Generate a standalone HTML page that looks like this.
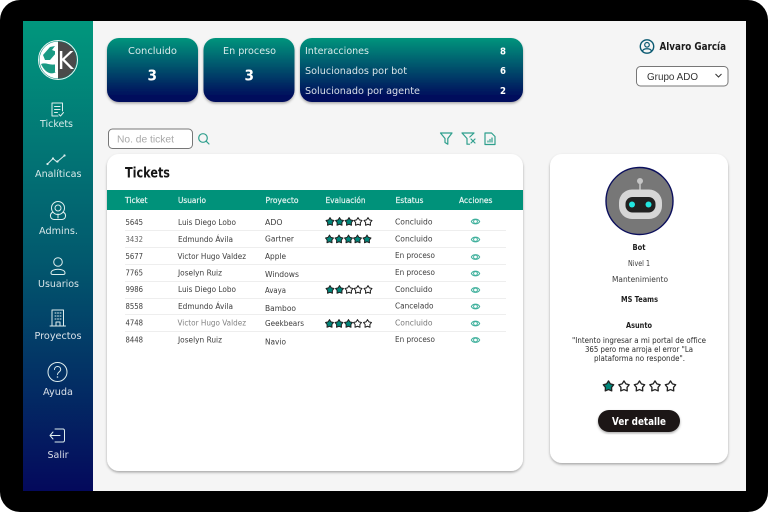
<!DOCTYPE html>
<html lang="es"><head><meta charset="utf-8"><title>Tickets</title>
<style>
html,body{margin:0;padding:0;background:#fff;width:768px;height:512px;overflow:hidden}
svg{display:block}
text{font-family:"DejaVu Sans","Liberation Sans",sans-serif}
.s{fill:#fff;font-size:9.8px;opacity:.85}
.c{fill:#fff;font-size:9.8px;opacity:.85}
.h{fill:#fff;font-size:7.8px;stroke:#fff;stroke-width:.2;opacity:.9}
.r{fill:#3c3c3c;font-size:7.8px}
.d{fill:#1c1c1c;font-size:8px;font-weight:bold}
.g{fill:#3c3c3c;font-size:8px}
.i{fill:none;stroke:#dfeeee;stroke-width:1;stroke-linecap:round;stroke-linejoin:round}
.t{fill:none;stroke:#2f9f8d;stroke-width:1.2;stroke-linecap:round;stroke-linejoin:round}
</style></head><body>
<svg width="768" height="512" viewBox="0 0 768 512" xmlns="http://www.w3.org/2000/svg">
<defs>
<linearGradient id="side" x1="0" y1="0" x2="0" y2="1"><stop offset="0" stop-color="#01977d"/><stop offset=".5" stop-color="#025a6e"/><stop offset="1" stop-color="#04095c"/></linearGradient>
<linearGradient id="card" x1="0" y1="0" x2="0" y2="1"><stop offset="0" stop-color="#01957c"/><stop offset=".95" stop-color="#03085b"/></linearGradient>
<filter id="sh" x="-10%" y="-10%" width="120%" height="120%"><feDropShadow dx="0" dy="1.5" stdDeviation="1.3" flood-color="#000" flood-opacity=".32"/></filter>
<symbol id="sf" viewBox="0 0 12 12"><path d="M6 1.300 L7.700 4 L10.800 4.800 L8.800 7.300 L9 10.500 L6 9.300 L3 10.500 L3.200 7.300 L1.200 4.800 L4.300 4 Z" fill="#00877a" stroke="#222" stroke-width="1.200" stroke-linejoin="round"/></symbol>
<symbol id="so" viewBox="0 0 12 12"><path d="M6 1.300 L7.700 4 L10.800 4.800 L8.800 7.300 L9 10.500 L6 9.300 L3 10.500 L3.200 7.300 L1.200 4.800 L4.300 4 Z" fill="#fff" stroke="#222" stroke-width="1.200" stroke-linejoin="round"/></symbol>
<symbol id="eye" viewBox="0 0 10 10"><path d="M.8 5 C2.500 1.800 7.500 1.800 9.200 5 C7.500 8.200 2.500 8.200 .8 5 Z" fill="none" stroke="#3fb09c" stroke-width="1"/><circle cx="5" cy="5" r="1.900" fill="none" stroke="#3fb09c" stroke-width="1"/></symbol>
</defs>

<rect x="0" y="0" width="768" height="512" rx="20" fill="#000"/>
<rect x="23" y="21" width="723" height="470" fill="#f5f5f5"/>
<rect x="23" y="21" width="70" height="470" fill="url(#side)"/>

<!-- logo -->
<circle cx="58" cy="60" r="19.500" fill="none" stroke="#e8f4f2" stroke-width="1"/>
<path d="M58 41.500 A18.500 18.500 0 0 0 58 78.500 Z" fill="#fff"/>
<path d="M58 41.500 A18.500 18.500 0 0 1 58 78.500 Z" fill="#4a4a4a"/>
<path d="M43 55 L50 47 L55 46 L52 50 L57 52 L50 60 L45 60 Z" fill="#1a9a84"/>
<path d="M41 64 C46 62 50 66 57 64 L57 71 C52 76 45 73 41 64 Z" fill="#1a9a84"/>
<path d="M55 48 L58 46 V72 L55 72 Z" fill="#fff"/>
<text x="57.500" y="69" font-size="25" fill="#fff" textLength="16" lengthAdjust="spacingAndGlyphs">K</text>

<!-- sidebar icons -->
<g class="i">
<path d="M62.500 111 V103 H52 V116 H58"/><path d="M54.500 106.500 H60 M54.500 109.500 H60 M54.500 112.500 H57.500"/><path d="M59 114.500 L60.500 116 L63.500 112.500"/>
<path d="M47.500 164 L53 158.500 L57 162 L64.500 155.500"/><circle cx="47.500" cy="164" r=".6"/><circle cx="53" cy="158.500" r=".6"/><circle cx="57.500" cy="161.500" r=".6"/><circle cx="64.500" cy="155.500" r=".6"/>
<circle cx="58" cy="208" r="6.500"/><circle cx="58" cy="208" r="3"/><path d="M53 212 C49 214 50 219 54 219.500 H62 C66 219 67 214 63 212"/><path d="M58 214 V218"/>
<circle cx="58" cy="262" r="4.300"/><path d="M51 273 C51 268 65 268 65 273 C65 275 63 274.500 58 274.500 C53 274.500 51 275 51 273 Z"/>
<path d="M52 325.500 V310 H63.500 V325.500 M50 326 H65.500"/><path d="M55 313 h1 M57.500 313 h1 M60 313 h1 M55 316 h1 M57.500 316 h1 M60 316 h1 M55 319 h1 M57.500 319 h1 M60 319 h1"/><path d="M56 326 V322 H60 V326"/>
<circle cx="57.500" cy="372" r="9.500"/>
<path d="M54.500 369.500 C54.500 365.500 60.700 365.500 60.700 369.500 C60.700 372 57.500 372 57.500 374.500"/><circle cx="57.500" cy="377" r=".3"/>
<path d="M55 429 H63 C64.500 429 64.500 430 64.500 431 V440 C64.500 441 64.500 442 63 442 H55"/><path d="M50 435.500 H60 M53 432 L50 435.500 L53 439"/>
</g>
<g class="s">
<text x="40" y="127" textLength="33" lengthAdjust="spacingAndGlyphs">Tickets</text>
<text x="35" y="177" textLength="46.500" lengthAdjust="spacingAndGlyphs">Analíticas</text>
<text x="39" y="234" textLength="39" lengthAdjust="spacingAndGlyphs">Admins.</text>
<text x="38" y="287" textLength="41" lengthAdjust="spacingAndGlyphs">Usuarios</text>
<text x="34.500" y="339" textLength="47" lengthAdjust="spacingAndGlyphs">Proyectos</text>
<text x="43" y="395" textLength="30" lengthAdjust="spacingAndGlyphs">Ayuda</text>
<text x="47.500" y="458" textLength="21" lengthAdjust="spacingAndGlyphs">Salir</text>
</g>

<!-- stat cards -->
<g filter="url(#sh)">
<rect x="107" y="38" width="91" height="64" rx="12" fill="url(#card)"/>
<rect x="203.500" y="38" width="91" height="64" rx="12" fill="url(#card)"/>
<rect x="300" y="38" width="223" height="64" rx="12" fill="url(#card)"/>
</g>
<g class="c">
<text x="128" y="54" textLength="49" lengthAdjust="spacingAndGlyphs">Concluido</text>
<text x="223" y="54" textLength="53" lengthAdjust="spacingAndGlyphs">En proceso</text>
<text x="305" y="54" textLength="64" lengthAdjust="spacingAndGlyphs">Interacciones</text>
<text x="305" y="74" textLength="102" lengthAdjust="spacingAndGlyphs">Solucionados por bot</text>
<text x="305" y="94" textLength="115" lengthAdjust="spacingAndGlyphs">Solucionado por agente</text>
</g>
<g fill="#fff" font-weight="bold">
<text x="147.500" y="80.500" font-size="15" textLength="9.500" lengthAdjust="spacingAndGlyphs">3</text>
<text x="244.500" y="80.500" font-size="15" textLength="9.500" lengthAdjust="spacingAndGlyphs">3</text>
<text x="500" y="54.500" font-size="10" textLength="6" lengthAdjust="spacingAndGlyphs">8</text>
<text x="500" y="74" font-size="10" textLength="6" lengthAdjust="spacingAndGlyphs">6</text>
<text x="500" y="94" font-size="10" textLength="6" lengthAdjust="spacingAndGlyphs">2</text>
</g>

<!-- search -->
<rect x="108.500" y="129" width="84" height="19.500" rx="4" fill="#fff" stroke="#777" stroke-width="1"/>
<text x="117" y="142.500" fill="#a8a8a8" font-size="10" style="font-family:'Liberation Sans',sans-serif" textLength="57" lengthAdjust="spacingAndGlyphs">No. de ticket</text>
<g class="t"><circle cx="203" cy="138" r="4.300"/><path d="M206.200 141.200 L209 144"/></g>

<!-- tool icons -->
<g class="t">
<path d="M440.500 133 H452 L447.800 138.500 V144.200 L445 142.500 V138.500 Z"/>
<path d="M462 133 H474 L469.800 137 M462 133 L467 138.500 V144.200 L469.500 144.200"/><path d="M471 139 L475 143 M475 139 L471 143"/>
<path d="M485 133 H491.500 L495 136.500 V144.500 H485 Z"/><path d="M488 142 V141 M490 142 V139.500 M492 142 V138"/>
</g>

<!-- tickets card -->
<rect x="107" y="154" width="416" height="317" rx="12" fill="#fff" filter="url(#sh)"/>
<text x="125" y="177.500" font-size="14" font-weight="bold" fill="#161616" textLength="45" lengthAdjust="spacingAndGlyphs">Tickets</text>
<rect x="107" y="190" width="416" height="20" fill="#00927a"/>
<g class="h">
<text x="125" y="203" textLength="22.500" lengthAdjust="spacingAndGlyphs">Ticket</text>
<text x="178" y="203" textLength="28" lengthAdjust="spacingAndGlyphs">Usuario</text>
<text x="265.500" y="203" textLength="33" lengthAdjust="spacingAndGlyphs">Proyecto</text>
<text x="325.500" y="203" textLength="40" lengthAdjust="spacingAndGlyphs">Evaluación</text>
<text x="395.500" y="203" textLength="28" lengthAdjust="spacingAndGlyphs">Estatus</text>
<text x="459" y="203" textLength="33.500" lengthAdjust="spacingAndGlyphs">Acciones</text>
</g>
<g stroke="#eeeeee" stroke-width="1">
<path d="M125 230.500 H506 M125 247.500 H506 M125 264.500 H506 M125 281.500 H506 M125 298.500 H506 M125 314.500 H506 M125 331.500 H506"/>
</g>
<g class="r">
<text x="125.500" y="225" textLength="17.500" lengthAdjust="spacingAndGlyphs">5645</text>
<text x="125.500" y="242" textLength="17.500" lengthAdjust="spacingAndGlyphs" opacity=".8">3432</text>
<text x="125.500" y="259" textLength="17.500" lengthAdjust="spacingAndGlyphs">5677</text>
<text x="125.500" y="275.500" textLength="17.500" lengthAdjust="spacingAndGlyphs">7765</text>
<text x="125.500" y="292" textLength="17.500" lengthAdjust="spacingAndGlyphs">9986</text>
<text x="125.500" y="309" textLength="17.500" lengthAdjust="spacingAndGlyphs">8558</text>
<text x="125.500" y="325.500" textLength="17.500" lengthAdjust="spacingAndGlyphs">4748</text>
<text x="125.500" y="342.500" textLength="17.500" lengthAdjust="spacingAndGlyphs">8448</text>

<text x="178" y="225" textLength="58" lengthAdjust="spacingAndGlyphs">Luis Diego Lobo</text>
<text x="178" y="242" textLength="55" lengthAdjust="spacingAndGlyphs">Edmundo Ávila</text>
<text x="177.500" y="259" textLength="68.500" lengthAdjust="spacingAndGlyphs">Victor Hugo Valdez</text>
<text x="178" y="275.500" textLength="44" lengthAdjust="spacingAndGlyphs">Joselyn Ruiz</text>
<text x="178" y="292" textLength="58" lengthAdjust="spacingAndGlyphs">Luis Diego Lobo</text>
<text x="178" y="309" textLength="55" lengthAdjust="spacingAndGlyphs">Edmundo Ávila</text>
<text x="177.500" y="325.500" textLength="68.500" lengthAdjust="spacingAndGlyphs" opacity=".65">Victor Hugo Valdez</text>
<text x="178" y="342.500" textLength="44" lengthAdjust="spacingAndGlyphs">Joselyn Ruiz</text>

<text x="265" y="225" textLength="17.500" lengthAdjust="spacingAndGlyphs">ADO</text>
<text x="265" y="241.500" textLength="29" lengthAdjust="spacingAndGlyphs">Gartner</text>
<text x="265" y="259" textLength="21" lengthAdjust="spacingAndGlyphs">Apple</text>
<text x="265" y="277" textLength="34" lengthAdjust="spacingAndGlyphs">Windows</text>
<text x="265" y="293" textLength="21" lengthAdjust="spacingAndGlyphs">Avaya</text>
<text x="265" y="311" textLength="31" lengthAdjust="spacingAndGlyphs">Bamboo</text>
<text x="265" y="326" textLength="39" lengthAdjust="spacingAndGlyphs">Geekbears</text>
<text x="265" y="344.500" textLength="21" lengthAdjust="spacingAndGlyphs">Navio</text>

<text x="395" y="224.500" textLength="37.500" lengthAdjust="spacingAndGlyphs">Concluido</text>
<text x="395" y="241.500" textLength="37.500" lengthAdjust="spacingAndGlyphs">Concluido</text>
<text x="395" y="258" textLength="40" lengthAdjust="spacingAndGlyphs">En proceso</text>
<text x="395" y="275" textLength="40" lengthAdjust="spacingAndGlyphs">En proceso</text>
<text x="395" y="292" textLength="37.500" lengthAdjust="spacingAndGlyphs">Concluido</text>
<text x="395" y="308.500" textLength="38.500" lengthAdjust="spacingAndGlyphs">Cancelado</text>
<text x="395" y="325.500" textLength="37.500" lengthAdjust="spacingAndGlyphs" opacity=".7">Concluido</text>
<text x="395" y="342" textLength="40" lengthAdjust="spacingAndGlyphs">En proceso</text>
</g>

<!-- table stars -->
<use href="#sf" x="325" y="216.500" width="10" height="10"/><use href="#sf" x="334.500" y="216.500" width="10" height="10"/><use href="#sf" x="344" y="216.500" width="10" height="10"/><use href="#so" x="353" y="216.500" width="10" height="10"/><use href="#so" x="363" y="216.500" width="10" height="10"/>
<use href="#sf" x="324.500" y="234" width="10" height="10"/><use href="#sf" x="334" y="234" width="10" height="10"/><use href="#sf" x="343.500" y="234" width="10" height="10"/><use href="#sf" x="352.500" y="234" width="10" height="10"/><use href="#sf" x="362" y="234" width="10" height="10"/>
<use href="#sf" x="325" y="284.500" width="10" height="10"/><use href="#sf" x="334.500" y="284.500" width="10" height="10"/><use href="#so" x="344" y="284.500" width="10" height="10"/><use href="#so" x="353" y="284.500" width="10" height="10"/><use href="#so" x="363" y="284.500" width="10" height="10"/>
<use href="#sf" x="324.500" y="318.500" width="10" height="10"/><use href="#sf" x="334" y="318.500" width="10" height="10"/><use href="#sf" x="343.500" y="318.500" width="10" height="10"/><use href="#so" x="352.500" y="318.500" width="10" height="10"/><use href="#so" x="362.500" y="318.500" width="10" height="10"/>

<!-- eyes -->
<use href="#eye" x="470.500" y="216.500" width="10" height="10"/>
<use href="#eye" x="470.500" y="234.500" width="10" height="10"/>
<use href="#eye" x="470.500" y="252" width="10" height="10"/>
<use href="#eye" x="470.500" y="268.500" width="10" height="10"/>
<use href="#eye" x="470.500" y="285" width="10" height="10"/>
<use href="#eye" x="470.500" y="301.500" width="10" height="10"/>
<use href="#eye" x="470.500" y="318.500" width="10" height="10"/>
<use href="#eye" x="470.500" y="335" width="10" height="10"/>

<!-- user -->
<circle cx="647" cy="46.500" r="6.700" fill="none" stroke="#0b5a72" stroke-width="1.400"/>
<circle cx="647" cy="44.800" r="2.300" fill="none" stroke="#0b5a72" stroke-width="1.200"/>
<path d="M642.500 51 C643.500 48 650.500 48 651.500 51" fill="none" stroke="#0b5a72" stroke-width="1.200"/>
<text x="659.500" y="50" font-size="10.500" font-weight="bold" fill="#1a1a1a" textLength="66.500" lengthAdjust="spacingAndGlyphs">Alvaro García</text>
<rect x="636.500" y="66.500" width="91.500" height="19.500" rx="4" fill="#fff" stroke="#777" stroke-width="1"/>
<text x="647" y="80" font-size="10" fill="#333" style="font-family:'Liberation Sans',sans-serif" textLength="51" lengthAdjust="spacingAndGlyphs">Grupo ADO</text>
<path d="M715.500 74 L718.500 77 L721.500 74" fill="none" stroke="#333" stroke-width="1"/>

<!-- right card -->
<rect x="550" y="154" width="178" height="309" rx="12" fill="#fff" filter="url(#sh)"/>
<circle cx="639.500" cy="201" r="33.500" fill="#777" stroke="#0b0f5c" stroke-width="1.400"/>
<path d="M640 183 V190" stroke="#c8c8c8" stroke-width="1.500"/>
<circle cx="640" cy="181" r="3" fill="#c6c6c6"/>
<rect x="619" y="189.500" width="43" height="29.500" rx="13" fill="#d6d6d6"/>
<rect x="625.500" y="197" width="30" height="15.500" rx="7" fill="#212121"/>
<circle cx="632" cy="204.500" r="3" fill="#22e6e0"/><circle cx="648.500" cy="204.500" r="3" fill="#22e6e0"/>

<g class="d">
<text x="632.500" y="250" textLength="13" lengthAdjust="spacingAndGlyphs">Bot</text>
<text x="621" y="302" textLength="37" lengthAdjust="spacingAndGlyphs">MS Teams</text>
<text x="626" y="328" textLength="26" lengthAdjust="spacingAndGlyphs">Asunto</text>
</g>
<g class="g">
<text x="628" y="266" textLength="22" lengthAdjust="spacingAndGlyphs">Nivel 1</text>
<text x="612" y="282" textLength="56" lengthAdjust="spacingAndGlyphs">Mantenimiento</text>
</g>
<g fill="#2a2a2a" font-size="7.800">
<text x="572" y="343" textLength="134" lengthAdjust="spacingAndGlyphs">"Intento ingresar a mi portal de office</text>
<text x="585" y="352" textLength="108" lengthAdjust="spacingAndGlyphs">365 pero me arroja el error "La</text>
<text x="594" y="361" textLength="91" lengthAdjust="spacingAndGlyphs">plataforma no responde".</text>
</g>
<use href="#sf" x="602" y="379.500" width="13" height="13"/>
<use href="#so" x="617.500" y="379.500" width="13" height="13"/>
<use href="#so" x="633" y="379.500" width="13" height="13"/>
<use href="#so" x="648.500" y="379.500" width="13" height="13"/>
<use href="#so" x="664" y="379.500" width="13" height="13"/>
<rect x="598" y="410" width="82" height="22" rx="11" fill="#1c1917" filter="url(#sh)"/>
<text x="612" y="425" font-size="10.500" font-weight="bold" fill="#fff" textLength="54" lengthAdjust="spacingAndGlyphs">Ver detalle</text>
</svg>
</body></html>
